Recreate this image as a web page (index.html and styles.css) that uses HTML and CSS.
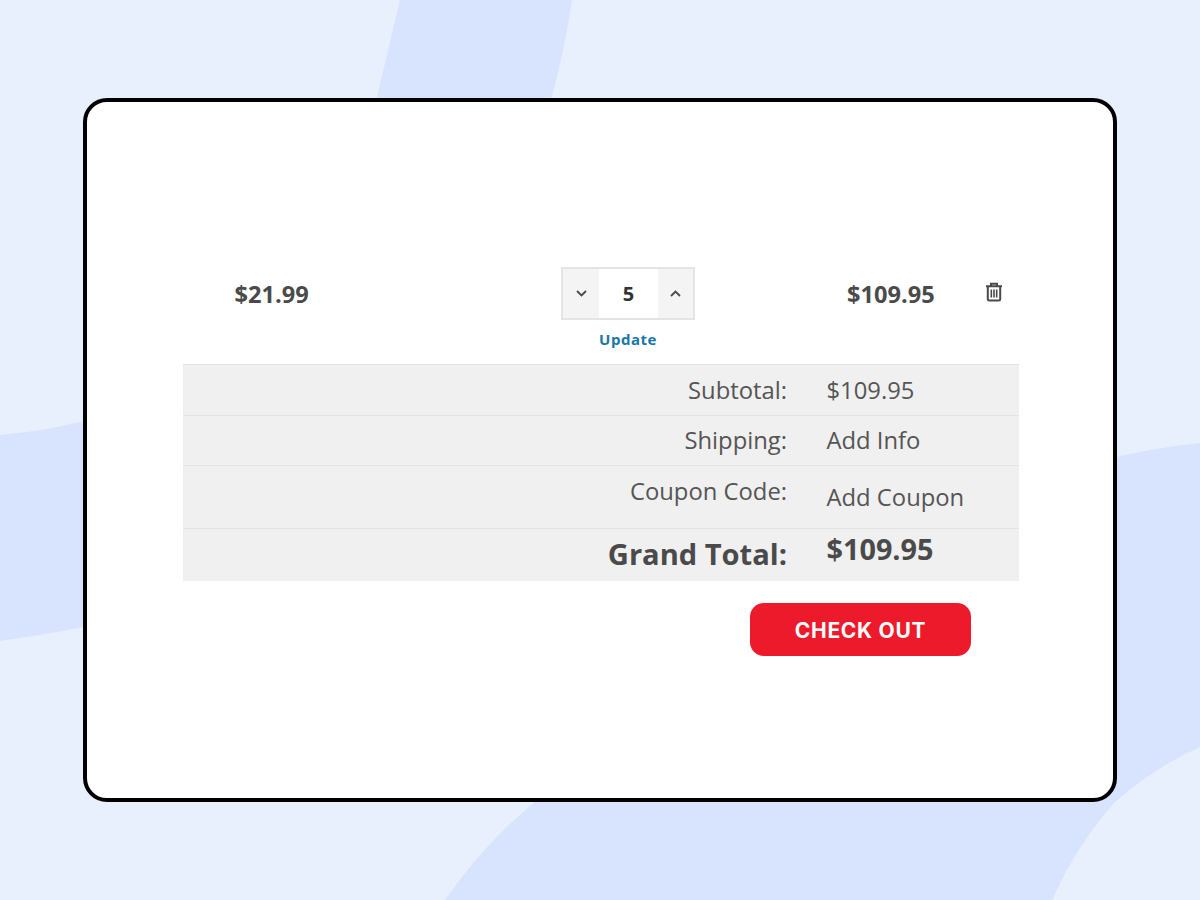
FILE: index.html
```html
<!DOCTYPE html>
<html lang="en">
<head>
<meta charset="utf-8">
<title>Cart</title>
<link rel="stylesheet" href="styles.css">
</head>
<body>
<svg class="bg" viewBox="0 0 1200 900" aria-hidden="true">
  <path class="blob" d="M400 0H572Q564 55 548 110H374Q388 50 400 0Z"/>
  <path class="blob" d="M0 435Q50 431 100 417V624Q50 634 0 641Z"/>
  <path class="blob" d="M1100 461Q1150 448 1200 443V747Q1155 767 1115 802L1100 790Z"/>
  <path class="blob" d="M445 900Q490 835 550 790H1125L1115 802Q1078 843 1052 900Z"/>
</svg>
<main class="card">
  <section class="item">
    <div class="price">$21.99</div>
    <div class="qty-col">
      <div class="qty">
        <button class="step step-l"><svg width="11" height="7" viewBox="0 0 11 7"><path d="M1 1 5.500 5.500 10 1"/></svg></button>
        <span class="qty-val">5</span>
        <button class="step step-r"><svg width="11" height="7" viewBox="0 0 11 7"><path d="M1 6 5.500 1.500 10 6"/></svg></button>
      </div>
      <a class="update">Update</a>
    </div>
    <div class="line-total">$109.95</div>
    <div class="trash">
      <svg width="18" height="20" viewBox="0 0 18 20"><path class="t" d="M1 4.200H17M6 4V1.800H12V4M2.800 4.500V17.200Q2.800 18.600 4.200 18.600H13.800Q15.200 18.600 15.200 17.200V4.500"/><path class="b" d="M6.300 7.500V15.500M9 7.500V15.500M11.700 7.500V15.500"/></svg>
    </div>
  </section>
  <section class="totals">
    <div class="row r1"><span class="lab">Subtotal:</span><span class="val">$109.95</span></div>
    <div class="row r2"><span class="lab">Shipping:</span><span class="val">Add Info</span></div>
    <div class="row r3"><span class="lab">Coupon Code:</span><span class="val">Add Coupon</span></div>
    <div class="row r4"><span class="lab">Grand Total:</span><span class="val">$109.95</span></div>
  </section>
  <div class="actions"><button class="checkout">CHECK OUT</button></div>
</main>
</body>
</html>
```
FILE: styles.css
```css
* { box-sizing: border-box; }
html, body { margin: 0; height: 100%; }
body {
  position: relative;
  width: 1200px;
  height: 900px;
  overflow: hidden;
  background: #e8effd;
  padding: 98px 83px;
  font-family: "Open Sans", sans-serif;
  color: #4a4a4a;
}
.bg { position: absolute; left: 0; top: 0; width: 1200px; height: 900px; }
.blob { fill: #d8e3fd; }
.card {
  position: relative;
  width: 1034px;
  height: 704px;
  background: #fff;
  border: 4px solid #000;
  border-radius: 24px;
  padding: 165px 94px 0 96px;
}
.item { position: relative; height: 97px; display: flex; align-items: flex-start; }
.price, .line-total { font-size: 23.6px; font-weight: 700; line-height: 30px; margin-top: 12px; }
.price { width: 378px; padding-left: 51.500px; }
.qty-col { width: 134px; display: flex; flex-direction: column; align-items: center; }
.qty {
  width: 134px;
  height: 53px;
  display: flex;
  border: 2px solid #e4e4e4;
  background: #fff;
}
.step {
  padding: 0;
  border: 0;
  background: #f4f4f4;
  display: flex;
  align-items: center;
  justify-content: center;
}
.step-l { width: 36px; }
.step-r { width: 35px; }
.step path { fill: none; stroke: #4a4a4a; stroke-width: 1.8; }
.qty-val { flex: 1; text-align: center; font-size: 20px; font-weight: 700; line-height: 50px; color: #333; }
.update { margin-top: 9px; font-size: 15px; font-weight: 700; line-height: 20px; letter-spacing: .5px; color: #1a76a6; }
.line-total { margin-left: 152px; width: 138px; }
.trash { margin-top: 15px; height: 22px; }
.t { fill: none; stroke: #4a4a4a; stroke-width: 2; }
.b { fill: none; stroke: #4a4a4a; stroke-width: 1.6; }
.totals { background: #f0f0f0; border-top: 1px solid #e2e2e2; }
.row { display: flex; border-bottom: 1px solid #e4e4e4; font-size: 23.8px; color: #555; }
.row:last-child { border-bottom: 0; }
.lab { width: 604px; text-align: right; }
.val { margin-left: 39.5px; }
.r1 { height: 51px; line-height: 50px; }
.r2 { height: 50px; line-height: 49px; }
.r3 { height: 63px; }
.r3 .lab { line-height: 51px; }
.r3 .val { line-height: 62px; }
.r4 { height: 52px; font-weight: 700; font-size: 29.1px; color: #4a4a4a; }
.r4 .lab { line-height: 51px; }
.r4 .val { line-height: 40px; font-size: 28.8px; }
.actions { display: flex; justify-content: flex-end; padding: 22px 48px 0 0; }
.checkout {
  width: 221px;
  height: 53px;
  border: 0;
  border-radius: 14px;
  background: #ed1a2b;
  color: #fff;
  font-family: "Inter", "Liberation Sans", sans-serif;
  font-size: 21px;
  font-weight: 700;
  letter-spacing: .7px;
  padding: 2px 0 0;
}
```
